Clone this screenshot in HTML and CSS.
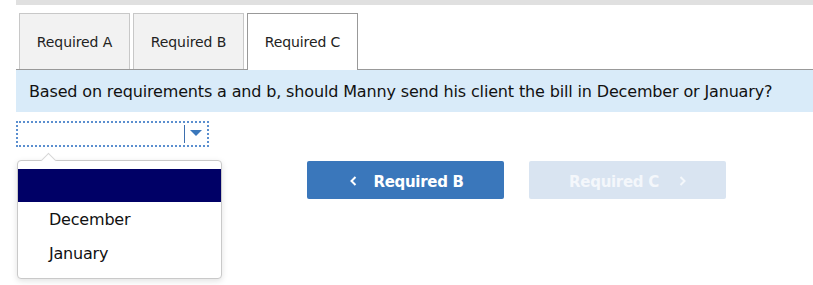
FILE: index.html
```html
<!DOCTYPE html>
<html lang="en">
<head>
    <meta charset="UTF-8">
    <title>Required C</title>
    <link rel="stylesheet" href="styles.css">
</head>
<body>
    <div class="page">
        <div class="top-bar"></div>

        <!-- tabs -->
        <div class="tabs">
            <div class="tab">Required A</div>
            <div class="tab">Required B</div>
            <div class="tab active">Required C</div>
        </div>

        <div class="question">
            Based on requirements a and b, should Manny send his client the bill in December or January?
        </div>

        <div class="answer-row">
            <div class="picker">
                <div class="select-box">
                    <div class="select-value"></div>
                    <div class="select-arrow"></div>
                </div>
                <!-- open dropdown list -->
                <div class="menu">
                    <div class="menu-item selected"></div>
                    <div class="menu-item">December</div>
                    <div class="menu-item">January</div>
                </div>
            </div>

            <div class="nav">
                <button class="nav-btn prev">
                    <svg class="chev left" width="7" height="10" viewBox="0 0 7 10"><path d="M5.5 1 L1.5 5 L5.5 9" fill="none" stroke="currentColor" stroke-width="2"/></svg>
                    Required B
                </button>
                <button class="nav-btn next" disabled>
                    Required C
                    <svg class="chev right" width="7" height="10" viewBox="0 0 7 10"><path d="M1.5 1 L5.5 5 L1.5 9" fill="none" stroke="currentColor" stroke-width="2"/></svg>
                </button>
            </div>
        </div>
    </div>
</body>
</html>
```

FILE: styles.css
```css
* {
    margin: 0;
    padding: 0;
    box-sizing: border-box;
}

html, body {
    min-height: 285px;
}

body {
    font-family: "DejaVu Sans", Verdana, sans-serif;
    background: white;
    color: #111;
}

.page {
    padding-left: 16px;
}

.top-bar {
    height: 5px;
    background: #e0e0e0;
}

.tabs {
    display: flex;
    gap: 3px;
    padding: 8px 0 0 3px;
}

.tab {
    width: 111px;
    height: 56px;
    display: flex;
    align-items: center;
    justify-content: center;
    background: #f2f2f2;
    border: 1px solid #c8c8c8;
    border-bottom: none;
    font-size: 14px;
    letter-spacing: -0.1px;
    color: #222;
}

.tab.active {
    background: white;
    border-color: #999;
    height: 57px;
    margin-bottom: -1px;
    position: relative;
}

.question {
    background: #d9ebf9;
    border-top: 1px solid #999;
    height: 43px;
    padding: 12px 0 0 13px;
    font-size: 16px;
    letter-spacing: -0.15px;
}

.answer-row {
    display: flex;
    padding-top: 9px;
}

.picker {
    width: 206px;
}

.select-box {
    width: 193px;
    height: 26px;
    border: 2px dotted #5b8fcf;
    display: flex;
}

.select-value {
    flex: 1;
    border-right: 1px solid #3d6fae;
    margin: 2px 0;
}

.select-arrow {
    width: 22px;
    display: flex;
    align-items: center;
    justify-content: center;
}

.select-arrow::after {
    content: "";
    border-left: 6px solid transparent;
    border-right: 6px solid transparent;
    border-top: 6px solid #3a77bb;
    margin-bottom: 3px;
}

.menu {
    position: relative;
    margin: 13px 0 0 1px;
    width: 205px;
    background: white;
    border: 1px solid #c9c9c9;
    border-radius: 4px;
    box-shadow: 0 2px 6px rgba(0,0,0,0.12);
    padding: 8px 0;
}

.menu::before {
    content: "";
    position: absolute;
    top: -6px;
    left: 25px;
    width: 10px;
    height: 10px;
    background: white;
    border-left: 1px solid #d6d6d6;
    border-top: 1px solid #d6d6d6;
    transform: rotate(45deg);
}

.menu-item {
    height: 34px;
    display: flex;
    align-items: center;
    padding-left: 31px;
    font-size: 16px;
    letter-spacing: -0.2px;
    position: relative;
}

.menu-item.selected {
    background: #000066;
    height: 33px;
}

.nav {
    display: flex;
    gap: 25px;
    margin-left: 85px;
    padding-top: 40px;
    align-items: flex-start;
}

.nav-btn {
    width: 197px;
    height: 38px;
    padding-top: 3px;
    border: none;
    border-radius: 2px;
    font-family: "DejaVu Sans", Verdana, sans-serif;
    font-weight: bold;
    font-size: 15px;
    letter-spacing: -0.3px;
    color: white;
    display: flex;
    align-items: center;
    justify-content: center;
}

.nav-btn.prev {
    background: #3a77bb;
}

.nav-btn.next {
    background: #d9e4f1;
    color: #f4f7fb;
}

.chev {
    position: relative;
    top: -1px;
}

.chev.left {
    margin-right: 19px;
    left: 3px;
}

.chev.right {
    margin-left: 20px;
}
```
